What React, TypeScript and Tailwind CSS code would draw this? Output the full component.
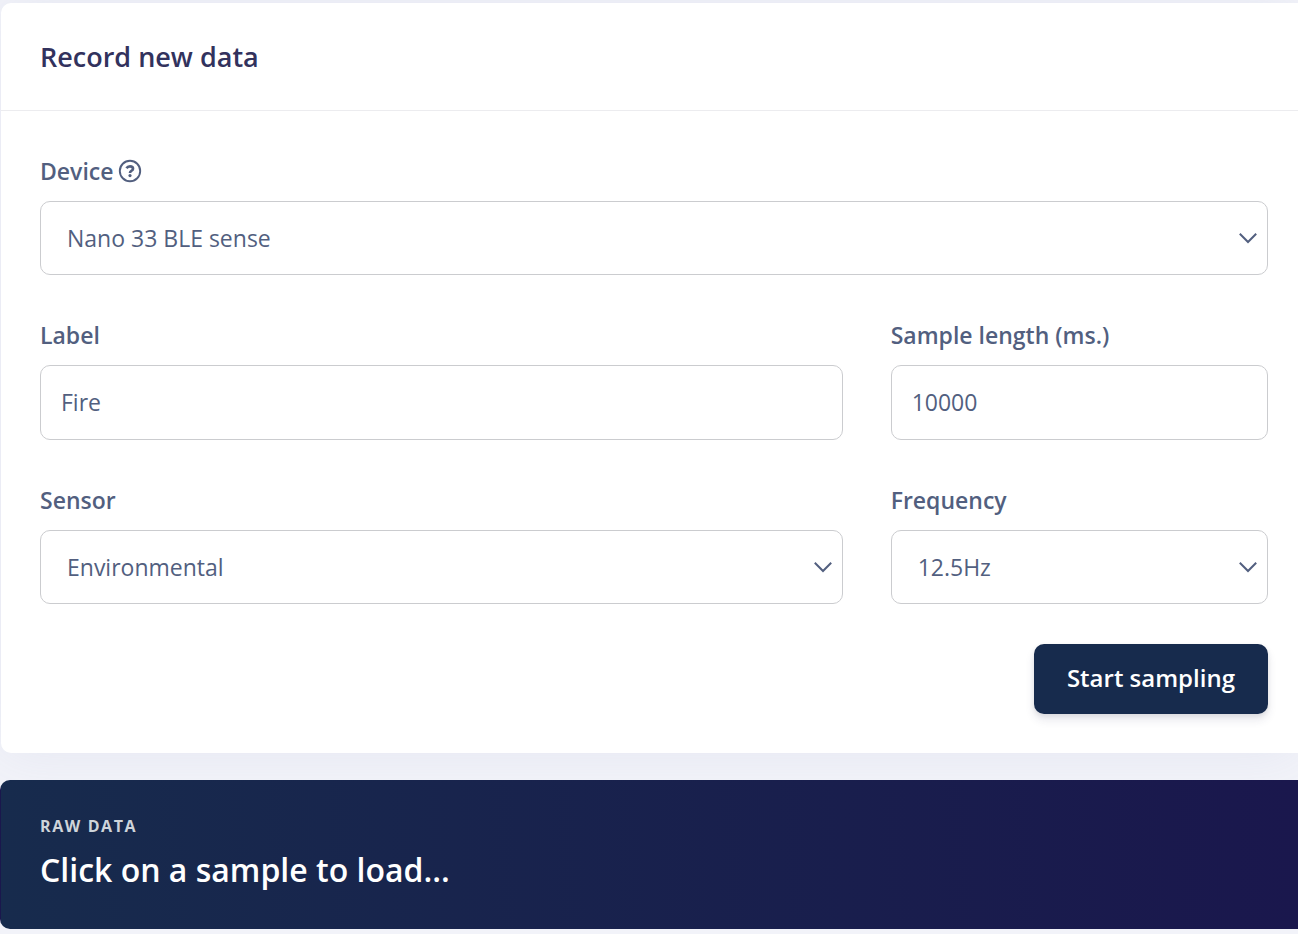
import { useState, type ReactNode } from "react";

const labelClass = "flex h-9 items-center text-[23px] font-semibold text-[#525f7f]";
const fieldClass =
  "w-full appearance-none rounded-[10px] border border-[#cbcccf] bg-white text-[23px] text-[#525f7f] outline-none focus:border-[#5e72e4]";

function HelpIcon() {
  return (
    <svg viewBox="0 0 24 24" className="size-6" fill="none" stroke="currentColor" aria-hidden="true">
      <circle cx="12" cy="12" r="10.2" strokeWidth="1.9" />
      <path d="M8.5 9.2C9.3 7.9 10.5 7.3 12 7.3c1.8 0 3 1 3 2.4 0 2-3 2.1-3 4.2" strokeWidth="2.7" />
      <circle cx="12" cy="16.6" r="1.6" fill="currentColor" stroke="none" />
    </svg>
  );
}

function Chevron() {
  return (
    <svg
      viewBox="0 0 20 12"
      className="pointer-events-none absolute right-2.5 top-1/2 h-3 w-5 -translate-y-1/2 text-[#525f7f]"
      fill="none"
      stroke="currentColor"
      strokeWidth="2"
      aria-hidden="true"
    >
      <path d="M1.8 1.8 10 10l8.2-8.2" />
    </svg>
  );
}

type FieldProps = { id: string; label: string; className?: string; children: ReactNode };

function Field({ id, label, className = "", children }: FieldProps) {
  return (
    <div className={`flex min-w-0 flex-col gap-3 ${className}`}>
      <label htmlFor={id} className={labelClass}>
        {label}
      </label>
      {children}
    </div>
  );
}

function Select({ id, options }: { id: string; options: string[] }) {
  return (
    <div className="relative">
      <select id={id} className={`${fieldClass} h-[74px] pl-[26px] pr-10`}>
        {options.map((option) => (
          <option key={option}>{option}</option>
        ))}
      </select>
      <Chevron />
    </div>
  );
}

function TextInput({ id, initial }: { id: string; initial: string }) {
  const [value, setValue] = useState(initial);
  return (
    <input
      id={id}
      type="text"
      value={value}
      onChange={(event) => setValue(event.target.value)}
      className={`${fieldClass} h-[75px] px-5 pb-0.5`}
    />
  );
}

export default function App() {
  return (
    <main className="min-h-screen bg-[#f2f3f9] pt-[3px] font-['Open_Sans',sans-serif]">
      <section className="ml-px rounded-l-[10px] bg-white shadow-[0_0_54px_0_rgba(136,152,190,0.12)]">
        <header className="border-b border-[#ececef] pb-[35px] pl-[39px] pr-[30px] pt-9">
          <h1 className="text-[27px] font-semibold leading-9 text-[#32325d]">Record new data</h1>
        </header>
        <form className="pb-[39px] pl-[39px] pr-[30px] pt-[42px]" onSubmit={(event) => event.preventDefault()}>
          <div className="grid grid-cols-3 gap-x-12 gap-y-[42px]">
            <div className="col-span-3 flex flex-col gap-3">
              <div className="flex items-center gap-[5px]">
                <label htmlFor="device" className={labelClass}>
                  Device
                </label>
                <button type="button" aria-label="About devices" className="text-[#525f7f]">
                  <HelpIcon />
                </button>
              </div>
              <Select id="device" options={["Nano 33 BLE sense"]} />
            </div>
            <Field id="label" label="Label" className="col-span-2">
              <TextInput id="label" initial="Fire" />
            </Field>
            <Field id="length" label="Sample length (ms.)">
              <TextInput id="length" initial="10000" />
            </Field>
            <Field id="sensor" label="Sensor" className="col-span-2">
              <Select id="sensor" options={["Environmental"]} />
            </Field>
            <Field id="frequency" label="Frequency">
              <Select id="frequency" options={["12.5Hz"]} />
            </Field>
          </div>
          <div className="mt-10 flex justify-end">
            <button
              type="submit"
              className="h-[70px] rounded-[10px] bg-[#172b4d] px-[33px] pb-0.5 text-[24px] font-semibold text-white shadow-[0_6px_10px_rgba(50,50,93,0.11),0_2px_5px_rgba(0,0,0,0.08)]"
            >
              Start sampling
            </button>
          </div>
        </form>
      </section>
      <section className="relative mt-[27px] rounded-l-[10px] border-y border-l border-transparent bg-linear-[87deg] from-[#172b4d] to-[#1a174d] pb-9 pl-[39px] pr-[30px] pt-[33px]">
        <p className="text-base font-bold uppercase leading-6 tracking-[1.6px] text-[#ced4da]">Raw data</p>
        <h2 className="mt-[9px] text-[32px] font-semibold leading-[45px] text-white">Click on a sample to load...</h2>
      </section>
    </main>
  );
}
